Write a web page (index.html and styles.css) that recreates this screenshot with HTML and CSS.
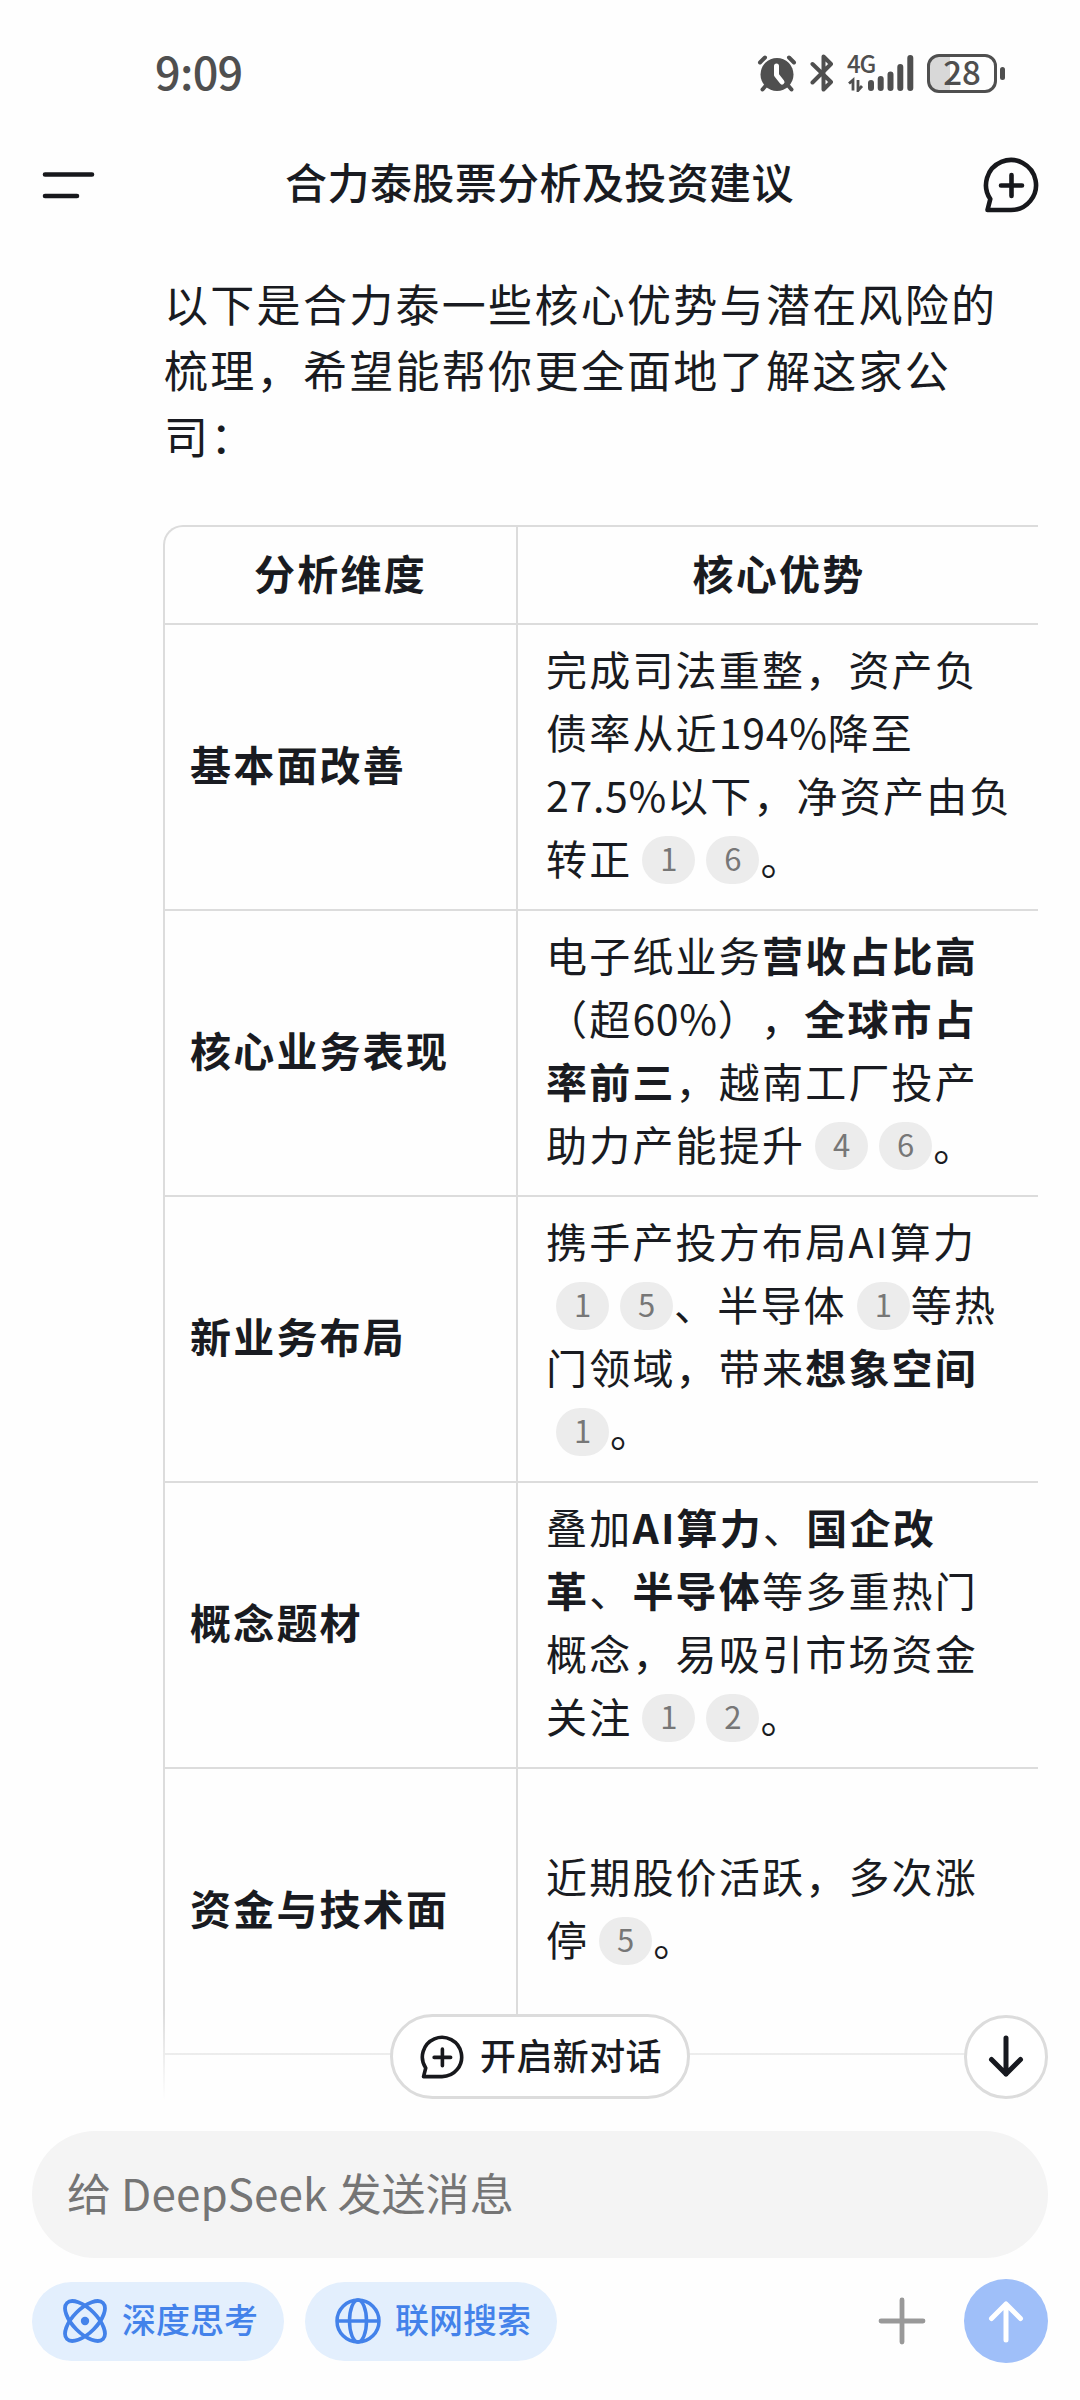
FILE: index.html
```html
<!DOCTYPE html>
<html lang="zh-CN">
<head>
  <meta charset="UTF-8">
  <meta name="viewport" content="width=device-width, initial-scale=1.0">
  <title>合力泰股票分析及投资建议</title>
  <link rel="stylesheet" href="styles.css">
</head>
<body>

  <div class="status-bar">
    <span class="time">9:09</span>
    <div class="status-icons">
      <svg class="alarm" width="40" height="38" viewBox="0 0 40 38">
        <circle cx="20" cy="20.500" r="16.500" fill="#4f4f4f"/>
        <path d="M3 8.500 8 3.500M37 8.500 32 3.500M8.500 32 5.500 35.500M31.500 32 34.500 35.500" stroke="#4f4f4f" stroke-width="4" stroke-linecap="round"/>
        <path d="M19.500 12v9l5.500 7" fill="none" stroke="#fff" stroke-width="5" stroke-linecap="round" stroke-linejoin="round"/>
      </svg>
      <svg class="bluetooth" width="24" height="38" viewBox="0 0 24 38">
        <path d="M2.500 10 21 28l-7.500 7.500v-33L21 10 2.500 28.500" fill="none" stroke="#4f4f4f" stroke-width="4" stroke-linecap="round" stroke-linejoin="round"/>
      </svg>
      <div class="signal">
        <span class="network">4G</span>
        <svg width="66" height="38" viewBox="0 0 66 38">
          <path d="M1 29.500 5 26v10.500M10 26v10.500L14 32" fill="none" stroke="#4f4f4f" stroke-width="2.800"/>
          <path d="M23 29v5M32.700 25v9M42.500 20.500V34M52.300 13v21M62.300 4v30" stroke="#4f4f4f" stroke-width="6" stroke-linecap="round"/>
        </svg>
      </div>
      <div class="battery"><span>28</span></div>
      <i class="battery-cap"></i>
    </div>
  </div>

  <header class="header">
    <svg width="54" height="54" viewBox="0 0 54 54">
      <path d="M3 16.500h47M3 38h32" stroke="#17181c" stroke-width="4.600" stroke-linecap="round"/>
    </svg>
    <h1>合力泰股票分析及投资建议</h1>
    <svg width="56" height="56" viewBox="0 0 56 56">
      <path d="M28 53H4.500l2.800-11A25 25 0 1 1 28 53Z" fill="none" stroke="#17181c" stroke-width="4.600" stroke-linejoin="round"/>
      <path d="M28.500 18v21M18 28.500h21" stroke="#17181c" stroke-width="4.600" stroke-linecap="round"/>
    </svg>
  </header>

  <main class="chat">
    <p class="intro">以下是合力泰一些核心优势与潜在风险的<br>梳理，希望能帮你更全面地了解这家公<br>司：</p>

    <div class="table-wrap">
      <table>
        <tr class="head">
          <th>分析维度</th>
          <th>核心优势</th>
        </tr>
        <tr>
          <td><b>基本面改善</b></td>
          <td>完成司法重整，资产负<br>债率从近<span class="num">194%</span>降至<br><span class="num">27.5%</span>以下，净资产由负<br>转正<span class="cite">1</span><span class="cite">6</span>。</td>
        </tr>
        <tr>
          <td><b>核心业务表现</b></td>
          <td>电子纸业务<b>营收占比高</b><br>（超<span class="num">60%</span>），<b>全球市占<br>率前三</b>，越南工厂投产<br>助力产能提升<span class="cite">4</span><span class="cite">6</span>。</td>
        </tr>
        <tr>
          <td><b>新业务布局</b></td>
          <td>携手产投方布局AI算力<br><span class="cite">1</span><span class="cite">5</span>、半导体<span class="cite">1</span>等热<br>门领域，带来<b>想象空间</b><br><span class="cite">1</span>。</td>
        </tr>
        <tr>
          <td><b>概念题材</b></td>
          <td>叠加<b>AI算力</b>、<b>国企改<br>革</b>、<b>半导体</b>等多重热门<br>概念，易吸引市场资金<br>关注<span class="cite">1</span><span class="cite">2</span>。</td>
        </tr>
        <tr>
          <td><b>资金与技术面</b></td>
          <td>近期股价活跃，多次涨<br>停<span class="cite">5</span>。</td>
        </tr>
        <tr>
          <td></td>
          <td></td>
        </tr>
      </table>
    </div>

    <div class="fade"></div>

    <button class="new-chat">
      <svg width="44" height="44" viewBox="0 0 56 56">
        <path d="M28 53H4.500l2.800-11A25 25 0 1 1 28 53Z" fill="none" stroke="#17181c" stroke-width="4.600" stroke-linejoin="round"/>
        <path d="M28.500 18v21M18 28.500h21" stroke="#17181c" stroke-width="4.600" stroke-linecap="round"/>
      </svg>
      <span>开启新对话</span>
    </button>
    <button class="scroll-down">
      <svg width="40" height="44" viewBox="0 0 40 44">
        <path d="M20 3v36M5.500 24.500 20 39l14.500-14.500" fill="none" stroke="#17191f" stroke-width="5" stroke-linecap="round" stroke-linejoin="round"/>
      </svg>
    </button>
  </main>

  <footer class="composer">
    <div class="message-box">给 DeepSeek 发送消息</div>
    <div class="tools">
      <button class="chip">
        <svg width="46" height="46" viewBox="0 0 46 46">
          <g fill="none" stroke="#4382ea" stroke-width="3.800">
            <ellipse cx="23" cy="23" rx="25.500" ry="12" transform="rotate(45 23 23)"/>
            <ellipse cx="23" cy="23" rx="25.500" ry="12" transform="rotate(-45 23 23)"/>
          </g>
          <circle cx="23" cy="23" r="4.200" fill="#4382ea"/>
        </svg>
        <span>深度思考</span>
      </button>
      <button class="chip">
        <svg width="46" height="46" viewBox="0 0 46 46">
          <g fill="none" stroke="#4382ea" stroke-width="3.500">
            <circle cx="23" cy="23" r="21"/>
            <ellipse cx="23" cy="23" rx="8.500" ry="21"/>
            <path d="M2 23h42"/>
          </g>
        </svg>
        <span>联网搜索</span>
      </button>
      <svg class="plus" width="48" height="48" viewBox="0 0 48 48">
        <path d="M24 3v42M3 24h42" stroke="#999" stroke-width="4.800" stroke-linecap="round"/>
      </svg>
      <button class="send">
        <svg width="40" height="44" viewBox="0 0 40 44">
          <path d="M20 41V5M5.500 19.500 20 5l14.500 14.500" fill="none" stroke="#fff" stroke-width="5" stroke-linecap="round" stroke-linejoin="round"/>
        </svg>
      </button>
    </div>
  </footer>

</body>
</html>
```
FILE: styles.css
```css
* {
  box-sizing: border-box;
}

body {
  display: flex;
  flex-direction: column;
  width: 1080px;
  height: 2400px;
  margin: 0;
  overflow: hidden;
  background-color: #fefefe;
  color: #191b21;
  font-family: "Noto Sans CJK SC", sans-serif;
  text-spacing-trim: space-all;
}

svg {
  display: block;
  flex: none;
}

button {
  display: flex;
  align-items: center;
  padding: 0;
  border: none;
  font-family: inherit;
  color: inherit;
}

button span {
  padding-bottom: 5px;
}

/* status bar */
.status-bar {
  display: flex;
  justify-content: space-between;
  align-items: center;
  height: 128px;
  padding: 18px 75px 0 155px;
  color: #4f4f4f;
}

.time {
  padding-bottom: 4px;
  font-size: 45px;
  font-weight: 500;
  line-height: 60px;
  letter-spacing: -0.7px;
}

.status-icons {
  display: flex;
  align-items: center;
}

.bluetooth {
  margin-left: 13px;
}

.signal {
  position: relative;
  margin-left: 14px;
}

.network {
  position: absolute;
  left: -1px;
  top: -3px;
  font-size: 24px;
  font-weight: 500;
  line-height: 24px;
  letter-spacing: -1.2px;
}

.battery {
  width: 70px;
  height: 39px;
  margin-left: 13px;
  border: 3px solid #4f4f4f;
  border-radius: 12px;
  background: linear-gradient(to right, #d8d8d8 20px, transparent 20px);
  font-size: 33px;
  font-weight: 500;
  line-height: 29px;
  text-align: center;
}

.battery-cap {
  width: 5px;
  height: 13px;
  margin-left: 3px;
  border-radius: 3px;
  background-color: #4f4f4f;
}

/* title */
.header {
  display: flex;
  justify-content: space-between;
  align-items: center;
  height: 112px;
  padding: 2px 41px 0 42px;
}

h1 {
  margin: 0;
  padding-bottom: 8px;
  font-size: 42px;
  font-weight: 500;
  line-height: 60px;
  letter-spacing: 0.4px;
}

/* conversation */
.chat {
  position: relative;
  height: 1860px;
  padding: 30px 42px 0 163px;
  overflow: hidden;
}

.intro {
  margin: 0 0 57px 1px;
  font-size: 44px;
  line-height: 66px;
  letter-spacing: 2.3px;
  white-space: nowrap;
}

.table-wrap {
  border-top: 2px solid #dcdcdc;
  border-left: 2px solid #dcdcdc;
  border-radius: 20px 0 0 0;
  overflow: hidden;
}

table {
  width: 877px;
  table-layout: fixed;
  border-collapse: separate;
  border-spacing: 0;
  font-size: 41px;
  line-height: 63px;
  letter-spacing: 2.2px;
}

th, td {
  height: 286px;
  padding: 0 0 8px 28px;
  border-right: 2px solid #dcdcdc;
  border-bottom: 2px solid #dcdcdc;
  text-align: left;
  white-space: nowrap;
}

th:first-child, td:first-child {
  width: 353px;
  padding-left: 25px;
}

.head th, .head th:first-child {
  height: 98px;
  padding: 0 0 6px;
  text-align: center;
}

.num {
  letter-spacing: 0.7px;
}

.cite {
  display: inline-block;
  width: 53px;
  height: 48px;
  margin: 0 1px 0 10px;
  border-radius: 24px;
  background-color: #ececec;
  color: #777;
  font-size: 31px;
  line-height: 44px;
  letter-spacing: 0;
  text-align: center;
  vertical-align: 4px;
}

/* bottom of the list dissolves into the page */
.fade {
  position: absolute;
  left: 0;
  right: 0;
  bottom: 0;
  height: 90px;
  background: linear-gradient(to bottom, rgba(254, 254, 254, 0), #fefefe);
}

.new-chat {
  position: absolute;
  left: 390px;
  top: 1774px;
  width: 300px;
  height: 85px;
  padding-left: 27px;
  gap: 16px;
  border: 3px solid #dcdcdc;
  border-radius: 43px;
  background-color: #fff;
  font-size: 36px;
  font-weight: 500;
  letter-spacing: 0.4px;
}

.scroll-down {
  position: absolute;
  left: 964px;
  top: 1775px;
  width: 84px;
  height: 84px;
  justify-content: center;
  border: 3px solid #dcdcdc;
  border-radius: 50%;
  background-color: #fff;
}

/* input area */
.composer {
  padding: 31px 32px 0;
}

.message-box {
  height: 127px;
  padding-left: 35px;
  border-radius: 64px;
  background-color: #f4f4f4;
  color: #757575;
  font-size: 44px;
  line-height: 123px;
  letter-spacing: 0.1px;
}

.tools {
  display: flex;
  align-items: center;
  margin-top: 21px;
}

.chip {
  width: 252px;
  height: 79px;
  margin-right: 21px;
  padding-left: 30px;
  gap: 14px;
  border-radius: 40px;
  background-color: #e3effd;
  color: #4382ea;
  font-size: 34px;
  font-weight: 500;
}

.plus {
  margin-left: auto;
}

.send {
  width: 84px;
  height: 84px;
  margin-left: 38px;
  justify-content: center;
  border-radius: 50%;
  background-color: #9fbff9;
}
```
